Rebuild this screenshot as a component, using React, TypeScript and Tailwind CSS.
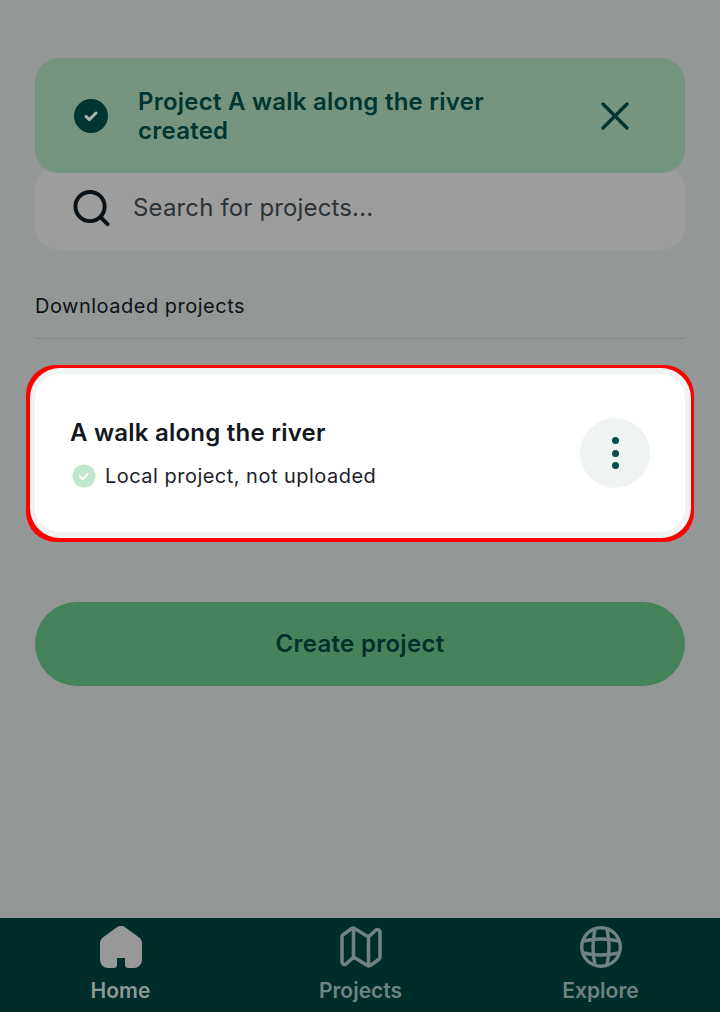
import React from "react";

const font = { fontFamily: "Inter, 'Liberation Sans', sans-serif" };

function NavItem({ label, icon, color }: { label: string; icon: React.ReactNode; color: string }) {
  return (
    <div className="flex w-[240px] flex-col items-center pt-[8px]" style={{ color }}>
      <div className="ml-[2px]">{icon}</div>
      <span className="mt-[8px] ml-[1px] text-[21px] leading-[30px] font-semibold">{label}</span>
    </div>
  );
}

export default function App() {
  return (
    <div style={font} className="relative flex h-[1012px] w-[720px] flex-col overflow-hidden bg-[#939796]">
      <div className="absolute top-[58px] left-[35px] flex h-[115px] w-[650px] items-center rounded-[24px] bg-[#769580] pr-[56px] pl-[38px]">
        <svg width="36" height="36" viewBox="0 0 36 36" className="shrink-0">
          <circle cx="18" cy="18" r="17" fill="#003531" />
          <path d="M13 18.500l3.500 3 6.500-6.500" fill="none" stroke="#a9b8ae" strokeWidth="3" strokeLinecap="round" strokeLinejoin="round" />
        </svg>
        <div className="ml-[29px] flex-1 pt-[1px] text-[24px] leading-[29px] font-semibold tracking-[0.24px] text-[#003531]">
          Project A walk along the river
          <br />
          created
        </div>
        <svg width="28" height="28" viewBox="0 0 28 28" fill="none" stroke="#003531" strokeWidth="3.4" strokeLinecap="round">
          <path d="M2 2l24 24M26 2L2 26" />
        </svg>
      </div>

      <div className="flex flex-1 flex-col px-[35px] pt-[166px]">
        <div className="flex h-[84px] items-center rounded-[24px] bg-[#9d9d9d] pl-[38px]">
          <svg width="37" height="37" viewBox="0 0 38 38" fill="none" stroke="#0a1117" strokeWidth="4" strokeLinecap="round" className="shrink-0">
            <circle cx="17.500" cy="17" r="15" />
            <path d="M28.500 28l7 7" />
          </svg>
          <span className="ml-[23px] text-[24px] tracking-[0.15px] text-[#2d3235]">Search for projects...</span>
        </div>

        <div className="mt-[42px] border-b border-[#848887] pb-[18px] text-[20px] leading-[28px] tracking-[0.5px] text-[#0c1216]">
          Downloaded projects
        </div>

        <div className="mx-[-9px] mt-[26px] h-[177px] rounded-[30px] bg-[#ff0000] pt-[3px] pr-[3px] pb-[4px] pl-[4px]">
          <div className="h-full rounded-[30px] border-t-[6px] border-r-[6px] border-b-[6px] border-l-[5px] border-[#eff4f3] bg-white">
            <div className="flex h-full items-center justify-between pr-[35px] pl-[35px]">
              <div className="flex flex-col">
                <span className="text-[24px] leading-[32px] font-semibold tracking-[0.23px] text-[#111820]">A walk along the river</span>
                <div className="mt-[13px] flex items-center">
                  <svg width="24" height="24" viewBox="0 0 24 24" className="ml-[2px] shrink-0">
                    <circle cx="12" cy="12" r="11.500" fill="#bfe6cf" />
                    <path d="M8 12.500l2.800 2.300 5-4.800" fill="none" stroke="#fff" strokeWidth="2.200" strokeLinecap="round" strokeLinejoin="round" />
                  </svg>
                  <span className="ml-[9px] text-[20px] leading-[28px] tracking-[0.48px] text-[#1c2228]">Local project, not uploaded</span>
                </div>
              </div>
              <div className="flex h-[70px] w-[70px] flex-col items-center justify-center gap-[5.5px] rounded-full bg-[#eff4f3]">
                <span className="h-[7px] w-[7px] rounded-full bg-[#054e48]" />
                <span className="h-[7px] w-[7px] rounded-full bg-[#054e48]" />
                <span className="h-[7px] w-[7px] rounded-full bg-[#054e48]" />
              </div>
            </div>
          </div>
        </div>

        <div className="mt-[60px] flex h-[84px] items-center justify-center rounded-[42px] bg-[#46835d] text-[24px] font-semibold tracking-[0.28px] text-[#01302c]">
          Create project
        </div>
      </div>

      <div className="flex h-[94px] shrink-0 bg-[#002d2a]">
        <NavItem
          label="Home"
          color="#8f9896"
          icon={
            <svg width="42" height="42" viewBox="0 0 42 42" className="text-[#989898]">
              <path
                fill="currentColor"
                d="M16.500 1.500a7.500 7.500 0 0 1 9 0l13 9.500A8 8 0 0 1 42 17.500V34a8 8 0 0 1-8 8h-5.500a3.500 3.500 0 0 1-3.500-3.500V32h-8v6.500a3.500 3.500 0 0 1-3.500 3.500H8a8 8 0 0 1-8-8V17.500a8 8 0 0 1 3.500-6.500z"
              />
            </svg>
          }
        />
        <NavItem
          label="Projects"
          color="#6f8480"
          icon={
            <svg width="42" height="42" viewBox="0 0 42 42" fill="none" stroke="currentColor" strokeWidth="3.600" strokeLinejoin="round" strokeLinecap="round">
              <path d="M2 11a3 3 0 0 1 1.300-2.500L11 3a4 4 0 0 1 4.400 0L26 9.500a4 4 0 0 0 4 0L36 4a2.500 2.500 0 0 1 4 2V31a3 3 0 0 1-1.300 2.500L31 39a4 4 0 0 1-4.400 0L16 32.500a4 4 0 0 0-4 0L6 38a2.500 2.500 0 0 1-4-2z" />
              <path d="M13.500 2V32M28.500 10V40" />
            </svg>
          }
        />
        <NavItem
          label="Explore"
          color="#6f8480"
          icon={
            <svg width="42" height="42" viewBox="0 0 42 42" fill="none" stroke="currentColor" strokeWidth="3.400">
              <circle cx="21" cy="21" r="19.300" />
              <path d="M15 3.500Q11 21 15 38.500M27 3.500Q31 21 27 38.500M3.500 15Q21 11 38.500 15M3.500 27Q21 31 38.500 27" />
            </svg>
          }
        />
      </div>
    </div>
  );
}
